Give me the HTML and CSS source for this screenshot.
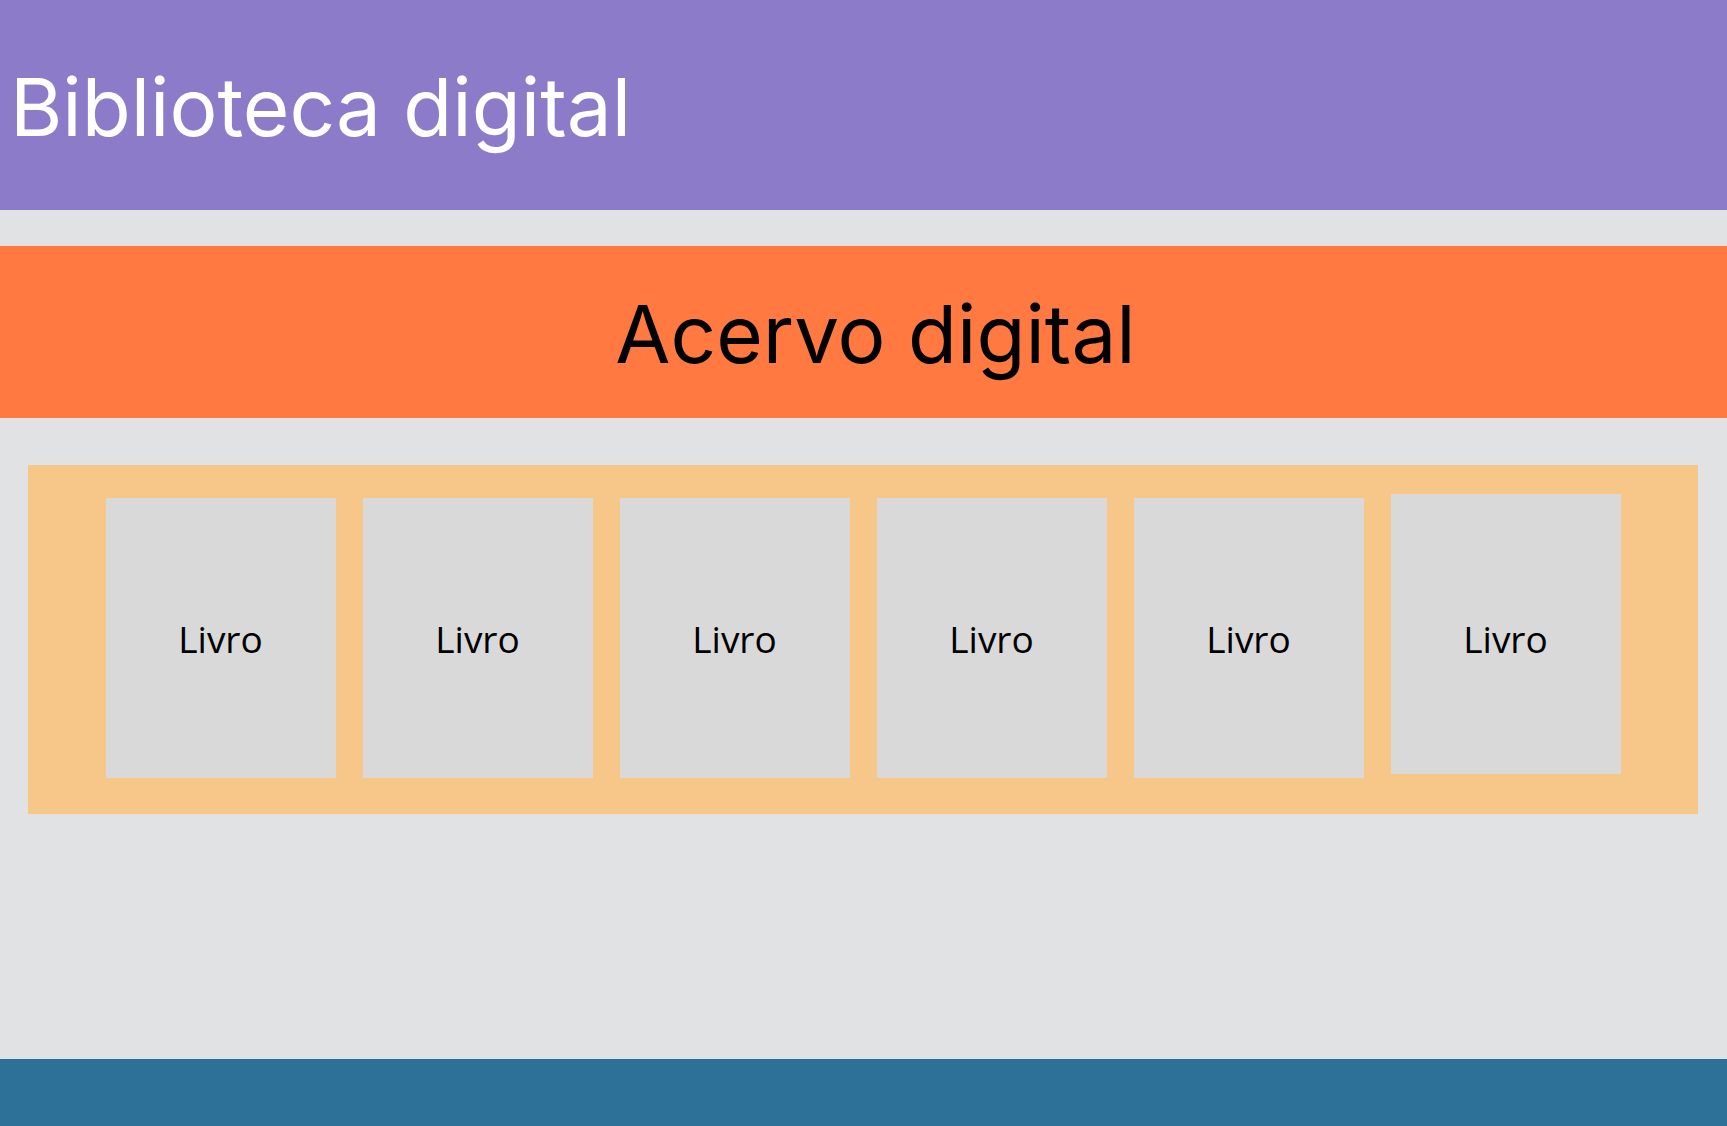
FILE: index.html
```html
<!DOCTYPE html>
<html lang="pt-BR">
<head>
<meta charset="utf-8">
<title>Biblioteca digital</title>
<link rel="stylesheet" href="styles.css">
</head>
<body>
<div class="page">
  <header class="topbar">
    <h1 class="brand">Biblioteca digital</h1>
  </header>
  <main class="content">
    <section class="banner">
      <h2 class="banner-title">Acervo digital</h2>
    </section>
    <div class="shelf">
      <div class="book">Livro</div>
      <div class="book">Livro</div>
      <div class="book">Livro</div>
      <div class="book">Livro</div>
      <div class="book">Livro</div>
      <div class="book book-raised">Livro</div>
    </div>
  </main>
  <footer class="footer"></footer>
</div>
</body>
</html>
```
FILE: styles.css
```css
html, body {
  margin: 0;
  padding: 0;
}
body {
  background: #e1e2e4;
  font-family: Inter, "Noto Sans", sans-serif;
}
.page {
  min-height: 100vh;
  display: flex;
  flex-direction: column;
}
.topbar {
  height: 210px;
  background: #8c7bc8;
  display: flex;
  align-items: center;
  padding: 4px 0 0 10px;
  box-sizing: border-box;
}
.brand {
  margin: 0;
  font-family: Inter, sans-serif;
  font-weight: 400;
  font-size: 80px;
  line-height: 1;
  color: #ffffff;
}
.content {
  flex: 1;
  padding-top: 36px;
}
.banner {
  height: 172px;
  background: #ff7940;
  display: flex;
  align-items: center;
  justify-content: center;
  padding: 4px 0 0 24px;
  box-sizing: border-box;
}
.banner-title {
  margin: 0;
  font-family: Inter, sans-serif;
  font-weight: 400;
  font-size: 80px;
  line-height: 1;
  color: #000000;
}
.shelf {
  margin: 47px 29px 0 28px;
  height: 349px;
  box-sizing: border-box;
  padding-top: 29px;
  background: #f6c788;
  display: flex;
  align-items: flex-start;
  justify-content: center;
  gap: 27px;
}
.book {
  width: 230px;
  height: 280px;
  flex: none;
  margin-top: 4px;
  box-sizing: border-box;
  background: #d9d9d9;
  display: flex;
  align-items: center;
  justify-content: center;
  font-family: "Open Sans", "Noto Sans", sans-serif;
  font-size: 37px;
  color: #000000;
}
.book-raised {
  margin-top: 0;
  padding-top: 9px;
}
.footer {
  height: 67px;
  background: #2d7199;
}
```
